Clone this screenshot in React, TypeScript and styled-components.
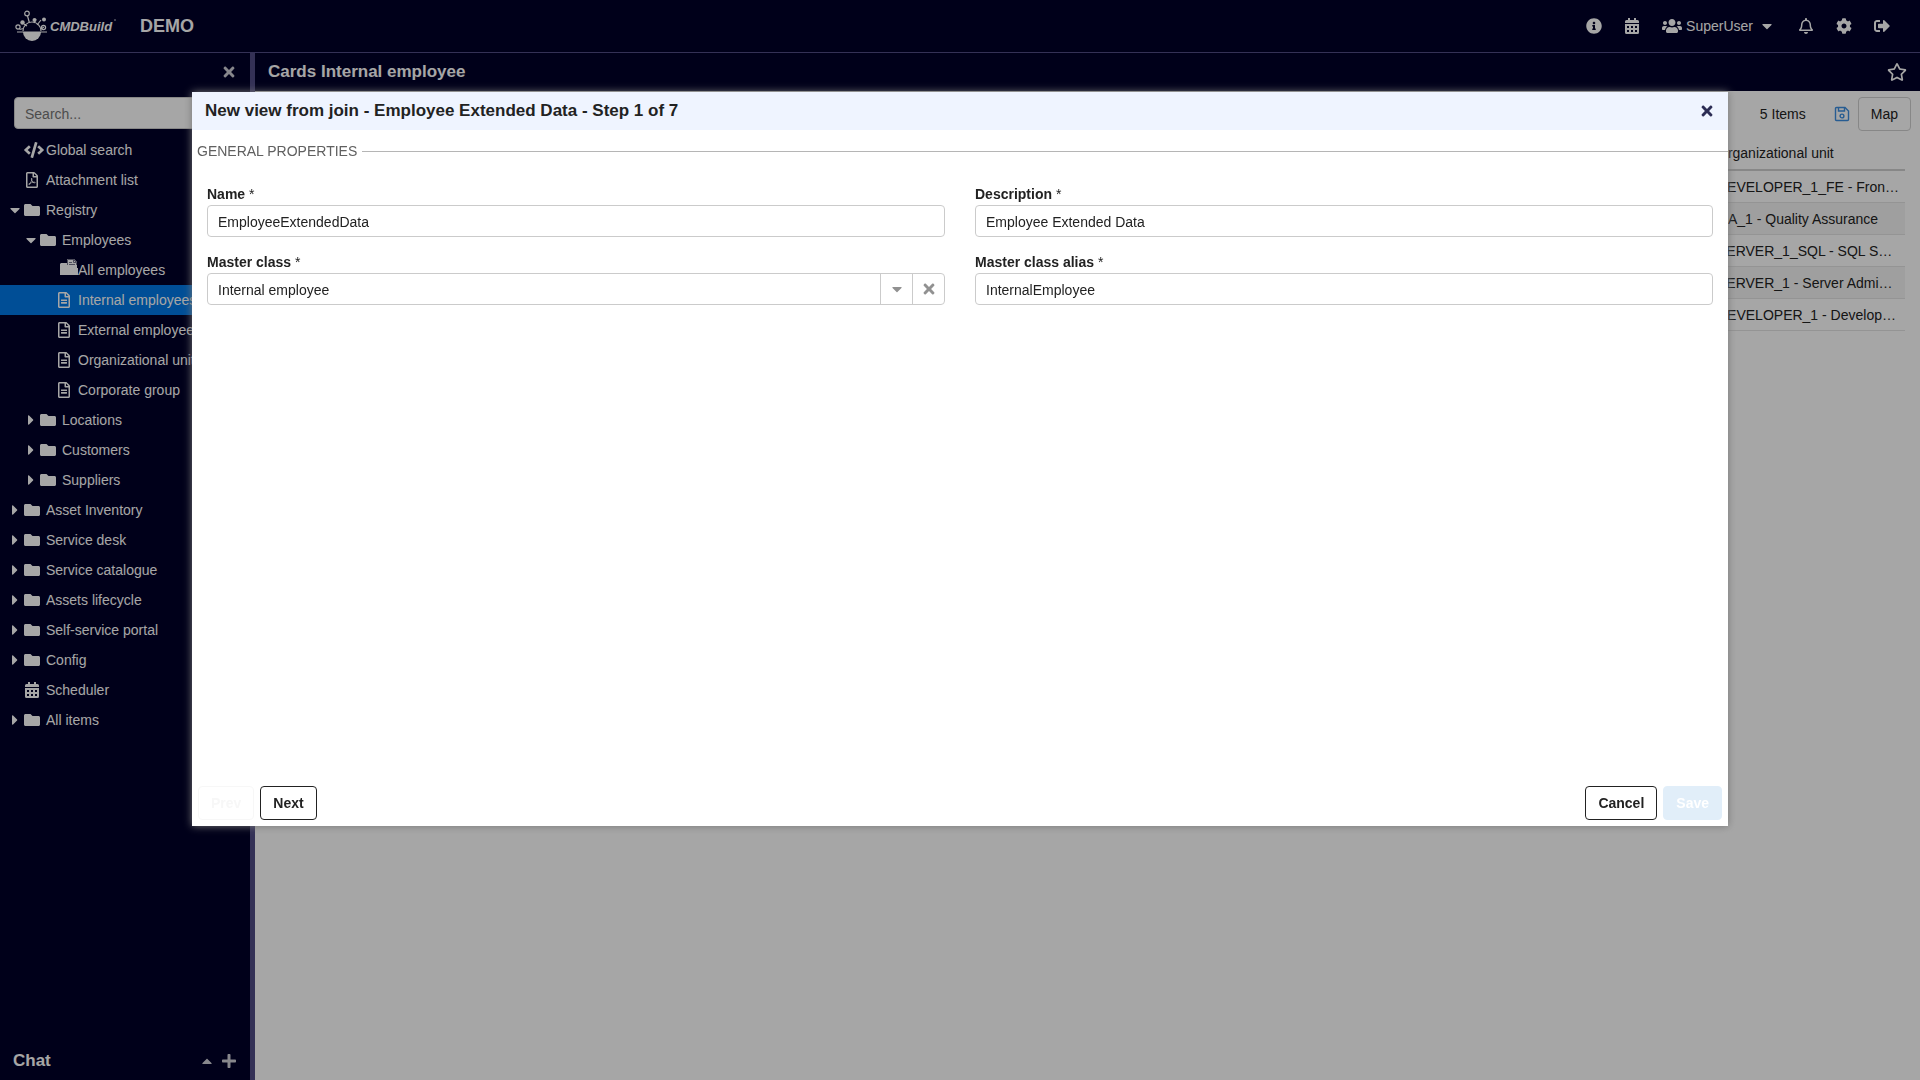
import React from 'react';
import styled, { createGlobalStyle } from 'styled-components';
import {
  FaRegBell, FaCaretDown, FaCaretRight, FaCaretUp, FaCode, FaCog, FaFolder,
  FaInfoCircle, FaPlus, FaRegFileAlt, FaRegFilePdf, FaRegStar, FaSignOutAlt, FaTimes, FaUsers,
} from 'react-icons/fa';
import type { IconType } from 'react-icons';

const Global = createGlobalStyle`
  *, *::before, *::after { box-sizing: border-box; }
  body { margin: 0; background: #fff; overflow: hidden; }
  body, button, input, select { font-family: "Liberation Sans", Arial, Helvetica, sans-serif; font-size: 14px; line-height: 20px; }
  button { cursor: pointer; }
`;

const navy = '#000028';
const edge = '#504c84';

const Page = styled.div`
  display: flex;
  flex-direction: column;
  height: 100vh;
  color: #fff;
`;
const TopBar = styled.header`
  display: flex;
  align-items: center;
  justify-content: space-between;
  height: 53px;
  padding: 0 30px 0 15px;
  background: ${navy};
  border-bottom: 1px solid ${edge};
`;
const Brand = styled.div`
  display: flex;
  align-items: center;
  gap: 23px;
  font-size: 18px;
  font-weight: bold;
`;
const Logo = styled.svg`
  display: block;
  width: 102px;
  height: 34px;
`;
const Tools = styled.nav`
  display: flex;
  align-items: center;
  gap: 22px;
`;
const IconButton = styled.button<{ $size?: number; $color?: string }>`
  display: inline-flex;
  align-items: center;
  gap: 4px;
  padding: 0;
  border: 0;
  background: none;
  color: ${p => p.$color ?? '#fff'};
  svg { font-size: ${p => p.$size ?? 16}px; }
`;
const UserButton = styled(IconButton)`
  svg:first-child { font-size: 20px; }
  svg:last-child { margin: 0 1px 0 2px; }
`;
const Body = styled.div`
  display: flex;
  flex: 1;
  min-height: 0;
`;
const Sidebar = styled.aside`
  display: flex;
  flex-direction: column;
  width: 255px;
  flex: none;
  background: ${navy};
  border-right: 5px solid ${edge};
`;
const SideTop = styled.div`
  display: flex;
  align-items: center;
  justify-content: flex-end;
  height: 38px;
  padding-right: 13px;
`;
const Search = styled.input`
  height: 32px;
  margin: 6px 14px;
  padding: 2px 10px 0;
  border: 1px solid #d0d0d0;
  border-radius: 4px;
  background: #fff;
  &::placeholder { color: #767676; opacity: 1; }
`;
const Tree = styled.ul`
  flex: 1;
  margin: 0;
  padding: 0;
  list-style: none;
`;
const Node = styled.li<{ $level: number; $active?: boolean }>`
  display: flex;
  align-items: center;
  height: 30px;
  padding-left: ${p => 8 + p.$level * 16}px;
  background: ${p => (p.$active ? '#0078e6' : 'transparent')};
  white-space: nowrap;
`;
const Arrow = styled.span`
  display: flex;
  justify-content: center;
  width: 14px;
  margin-right: 2px;
`;
const NodeIcon = styled.span<{ $wide?: 'start' | 'end' }>`
  display: flex;
  justify-content: ${p => (p.$wide ? `flex-${p.$wide}` : 'center')};
  width: ${p => (p.$wide ? 22 : 16)}px;
  margin-right: ${p => (p.$wide ? 0 : 6)}px;
  svg { flex: none; font-size: ${p => (p.$wide ? 20 : 16)}px; }
`;
const Chat = styled.div`
  display: flex;
  align-items: center;
  gap: 6px;
  height: 38px;
  padding: 0 13px;
  font-size: 17px;
  font-weight: bold;
`;
const Grow = styled.span`
  flex: 1;
`;
const Main = styled.main`
  flex: 1;
  min-width: 0;
  background: #fff;
  color: #222;
`;
const TitleBar = styled.div`
  display: flex;
  align-items: center;
  justify-content: space-between;
  height: 38px;
  padding: 0 13px;
  background: ${navy};
  color: #fff;
`;
const Title = styled.h1`
  margin: 0;
  font-size: 17px;
  line-height: 20px;
`;
const GridBar = styled.div`
  display: flex;
  align-items: center;
  justify-content: flex-end;
  height: 46px;
  padding: 0 9px;
`;
const Count = styled.span`
  margin-right: 28px;
`;
const MapButton = styled.button`
  height: 34px;
  margin-left: 8px;
  padding: 0 12px;
  border: 1px solid #cfcfcf;
  border-radius: 4px;
  background: #fff;
  color: #222;
`;
const TableHolder = styled.div`
  padding-right: 15px;
`;
const Table = styled.table`
  width: 100%;
  table-layout: fixed;
  border-collapse: separate;
  border-spacing: 0;
  th { height: 34px; padding: 0 5px 0 10px; font-weight: normal; text-align: left; border-bottom: 2px solid #cfcfcf; }
  td { height: 32px; padding: 0 5px 0 10px; border-bottom: 1px solid #e3e3e3; overflow: hidden; text-overflow: ellipsis; white-space: nowrap; }
  tbody tr:nth-child(even) { background: #f5f5f5; }
`;
const UnitCol = styled.col`
  width: 198px;
`;
const Backdrop = styled.div`
  position: fixed;
  inset: 0;
  background: rgba(0, 0, 0, 0.35);
`;
const Dialog = styled.section`
  position: fixed;
  top: 92px;
  left: 10%;
  display: flex;
  flex-direction: column;
  width: 80%;
  height: 68vh;
  background: #fff;
  color: #222;
  box-shadow: 0 0 8px #777;
`;
const DialogHead = styled.header`
  display: flex;
  align-items: center;
  justify-content: space-between;
  height: 38px;
  padding: 0 13px;
  background: #eff4ff;
`;
const DialogTitle = styled.h2`
  margin: 0;
  font-size: 17px;
  line-height: 20px;
`;
const Legend = styled.h3`
  display: flex;
  align-items: center;
  gap: 5px;
  margin: 0;
  padding: 11px 0 23px 5px;
  color: #606060;
  font-size: 14px;
  font-weight: normal;
  text-transform: uppercase;
  &::after { content: ""; flex: 1; height: 1px; background: #b5b5b5; }
`;
const Form = styled.form`
  display: grid;
  grid-template-columns: 1fr 1fr;
  gap: 15px 30px;
  flex: 1;
  align-content: start;
  padding: 0 15px;
`;
const Field = styled.div`
  display: flex;
  flex-direction: column;
  gap: 1px;
`;
const Label = styled.label`
  font-weight: bold;
  span { font-weight: normal; }
`;
const Box = styled.div`
  display: flex;
  height: 32px;
  border: 1px solid #cbcbcb;
  border-radius: 4px;
  background: #fff;
  overflow: hidden;
`;
const boxText = `
  flex: 1;
  min-width: 0;
  padding: 2px 10px 0;
  border: 0;
  background: none;
  color: #222;
  appearance: none;
`;
const TextInput = styled.input`${boxText}`;
const Select = styled.select`${boxText}`;
const Trigger = styled.button`
  display: flex;
  align-items: center;
  justify-content: center;
  width: 32px;
  padding: 0;
  border: 0;
  border-left: 1px solid #cbcbcb;
  background: none;
  color: #919191;
  font-size: 16px;
`;
const DialogFoot = styled.footer`
  display: flex;
  gap: 6px;
  padding: 6px;
`;
const Button = styled.button<{ $primary?: boolean }>`
  min-width: 56px;
  height: 34px;
  padding: 0 12px;
  border: 1px solid ${p => (p.$primary ? '#e1eef9' : '#222')};
  border-radius: 4px;
  background: ${p => (p.$primary ? '#e1eef9' : '#fff')};
  color: #222;
  font-weight: bold;
  &:disabled { color: ${p => (p.$primary ? '#fff' : '#f7f7f7')}; border-color: ${p => (p.$primary ? '#e1eef9' : '#f7f7f7')}; }
`;

const FolderDoc = () => (
  <svg width="18" height="24" viewBox="0 0 18 24" fill="#fff">
    <path d="M0 6l1-1h6v5h11v7H0z" />
    <path d="M7 1h7l3 3v7H7z" />
    <path d="M7.500 7V1.500h6l3 3V7M9 4.500h3M9 6.500h6M13.500 1v3.500h3" stroke="#77778c" strokeWidth="1" fill="none" />
  </svg>
);
const CalendarGrid = () => (
  <svg width="16" height="16" viewBox="0 0 16 16" fill="currentColor">
    <path d="M1 5V3.500Q1 2 2.500 2H4V0h2v2h4V0h2v2h1.500Q15 2 15 3.500V5zM1 6h14v8.500Q15 16 13.500 16h-11Q1 16 1 14.500zM3 8v2h2V8zm4 0v2h2V8zm4 0v2h2V8zm-8 4v2h2v-2zm4 0v2h2v-2zm4 0v2h2v-2z" fillRule="evenodd" />
  </svg>
);
const DiskIcon = () => (
  <svg width="16" height="16" viewBox="0 0 16 16" fill="none" stroke="currentColor" strokeWidth="1.400">
    <path d="M1.500 2.500q0-1 1-1H11l3.500 3.500v8.500q0 1-1 1h-11q-1 0-1-1z" />
    <path d="M4.500 1.500V5h6V1.500" />
    <circle cx="8" cy="10" r="1.900" />
  </svg>
);

type Item = {
  label: string; level: number; icon: IconType | React.FC; wide?: 'start' | 'end'; open?: boolean; active?: boolean;
};
const items: Item[] = [
  { label: 'Global search', level: 0, icon: FaCode, wide: 'start' },
  { label: 'Attachment list', level: 0, icon: FaRegFilePdf },
  { label: 'Registry', level: 0, icon: FaFolder, open: true },
  { label: 'Employees', level: 1, icon: FaFolder, open: true },
  { label: 'All employees', level: 2, icon: FolderDoc, wide: 'end' },
  { label: 'Internal employees', level: 2, icon: FaRegFileAlt, active: true },
  { label: 'External employees', level: 2, icon: FaRegFileAlt },
  { label: 'Organizational units', level: 2, icon: FaRegFileAlt },
  { label: 'Corporate group', level: 2, icon: FaRegFileAlt },
  { label: 'Locations', level: 1, icon: FaFolder, open: false },
  { label: 'Customers', level: 1, icon: FaFolder, open: false },
  { label: 'Suppliers', level: 1, icon: FaFolder, open: false },
  { label: 'Asset Inventory', level: 0, icon: FaFolder, open: false },
  { label: 'Service desk', level: 0, icon: FaFolder, open: false },
  { label: 'Service catalogue', level: 0, icon: FaFolder, open: false },
  { label: 'Assets lifecycle', level: 0, icon: FaFolder, open: false },
  { label: 'Self-service portal', level: 0, icon: FaFolder, open: false },
  { label: 'Config', level: 0, icon: FaFolder, open: false },
  { label: 'Scheduler', level: 0, icon: CalendarGrid },
  { label: 'All items', level: 0, icon: FaFolder, open: false },
];
const units = [
  'DEVELOPER_1_FE - Frontend Developer',
  'QA_1 - Quality Assurance',
  'SERVER_1_SQL - SQL Server',
  'SERVER_1 - Server Administration',
  'DEVELOPER_1 - Development',
];

function TextField({ id, label, value }: { id: string; label: string; value: string }) {
  return (
    <Field>
      <Label htmlFor={id}>{label} <span>*</span></Label>
      <Box><TextInput id={id} defaultValue={value} /></Box>
    </Field>
  );
}

export default function App() {
  return (
    <>
      <Global />
      <Page>
        <TopBar>
          <Brand>
            <Logo viewBox="0 0 102 34" aria-label="CMDBuild">
              <g fill="none" stroke="#fff" strokeWidth="1.200">
                <path d="M8 22a9 9 0 0 1 18 0M2 23h30M12.500 7l2 7M9 15l3 2M19 14l2-4M22 16l4-5M26 20l3-2M4.500 20.500l4-1" />
                <circle cx="12" cy="4.500" r="2.300" />
                <circle cx="3" cy="18" r="2.100" />
                <circle cx="28.500" cy="18.500" r="2.100" />
              </g>
              <path d="M8 23h18a9 9 0 0 1-18 0z" fill="#fff" />
              <g fill="#fff">
                <circle cx="7.500" cy="13.500" r="2.200" />
                <circle cx="19.500" cy="11" r="2" />
                <circle cx="29" cy="10.500" r="2" />
              </g>
              <text x="35" y="22" fill="#fff" fontSize="13" fontWeight="bold" fontStyle="italic">CMDBuild</text>
              <circle cx="100" cy="11" r="1" fill="#fff" opacity="0.5" />
            </Logo>
            <span>DEMO</span>
          </Brand>
          <Tools>
            <IconButton aria-label="Info"><FaInfoCircle /></IconButton>
            <IconButton aria-label="Calendar"><CalendarGrid /></IconButton>
            <UserButton><FaUsers />SuperUser <FaCaretDown /></UserButton>
            <IconButton aria-label="Notifications"><FaRegBell /></IconButton>
            <IconButton aria-label="Settings"><FaCog /></IconButton>
            <IconButton aria-label="Sign out"><FaSignOutAlt /></IconButton>
          </Tools>
        </TopBar>
        <Body>
          <Sidebar>
            <SideTop><IconButton aria-label="Close menu" $color="#d0d0d8"><FaTimes /></IconButton></SideTop>
            <Search type="search" placeholder="Search..." aria-label="Search" />
            <Tree>
              {items.map(({ label, level, icon: Icon, wide, open, active }) => (
                <Node key={label} $level={level} $active={active}>
                  <Arrow>{open === undefined ? null : open ? <FaCaretDown size={16} /> : <FaCaretRight size={16} />}</Arrow>
                  <NodeIcon $wide={wide}><Icon /></NodeIcon>
                  {label}
                </Node>
              ))}
            </Tree>
            <Chat>
              Chat<Grow />
              <IconButton aria-label="Expand chat" $color="#d0d0d8"><FaCaretUp /></IconButton>
              <IconButton aria-label="New chat" $color="#d0d0d8"><FaPlus /></IconButton>
            </Chat>
          </Sidebar>
          <Main>
            <TitleBar>
              <Title>Cards Internal employee</Title>
              <IconButton aria-label="Favourite" $size={20}><FaRegStar /></IconButton>
            </TitleBar>
            <GridBar>
              <Count>5 Items</Count>
              <IconButton aria-label="Save view" $color="#3c8ee0"><DiskIcon /></IconButton>
              <MapButton>Map</MapButton>
            </GridBar>
            <TableHolder>
              <Table>
                <colgroup><col /><UnitCol /></colgroup>
                <thead><tr><th /><th>Organizational unit</th></tr></thead>
                <tbody>{units.map(u => <tr key={u}><td /><td>{u}</td></tr>)}</tbody>
              </Table>
            </TableHolder>
          </Main>
        </Body>
      </Page>
      <Backdrop />
      <Dialog role="dialog" aria-labelledby="dialog-title">
        <DialogHead>
          <DialogTitle id="dialog-title">New view from join - Employee Extended Data - Step 1 of 7</DialogTitle>
          <IconButton aria-label="Close" $color="#2c2c54"><FaTimes /></IconButton>
        </DialogHead>
        <Legend>General properties</Legend>
        <Form>
          <TextField id="name" label="Name" value="EmployeeExtendedData" />
          <TextField id="description" label="Description" value="Employee Extended Data" />
          <Field>
            <Label htmlFor="master">Master class <span>*</span></Label>
            <Box>
              <Select id="master"><option>Internal employee</option></Select>
              <Trigger type="button" aria-label="Open list"><FaCaretDown /></Trigger>
              <Trigger type="button" aria-label="Clear"><FaTimes /></Trigger>
            </Box>
          </Field>
          <TextField id="alias" label="Master class alias" value="InternalEmployee" />
        </Form>
        <DialogFoot>
          <Button disabled>Prev</Button>
          <Button>Next</Button>
          <Grow />
          <Button>Cancel</Button>
          <Button $primary disabled>Save</Button>
        </DialogFoot>
      </Dialog>
    </>
  );
}
